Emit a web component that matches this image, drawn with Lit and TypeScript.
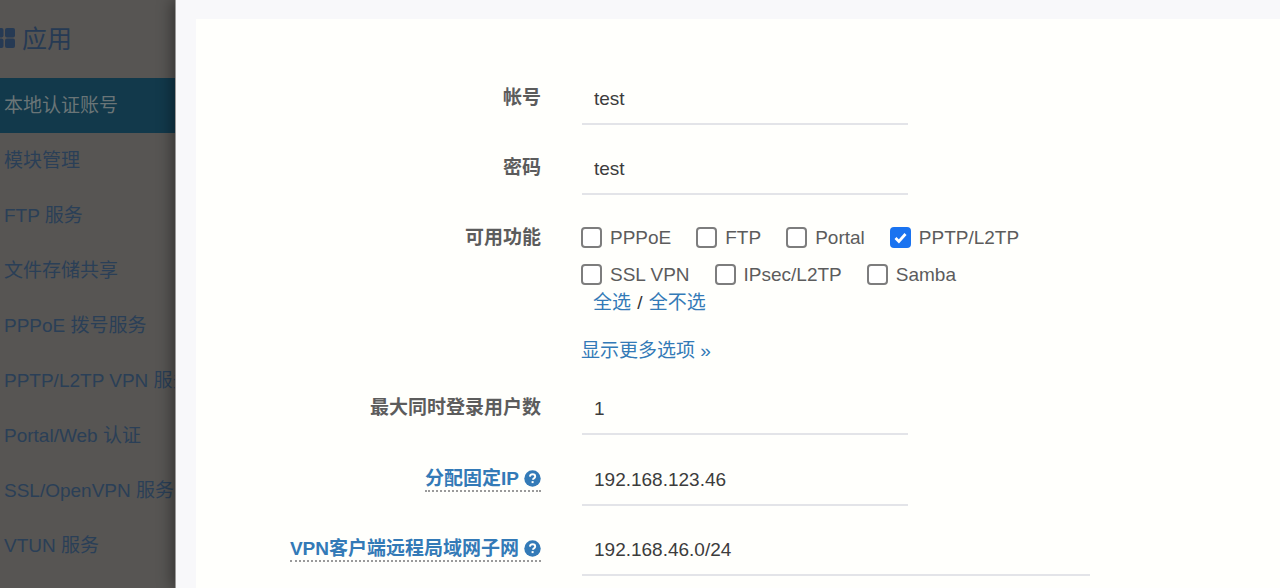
import { LitElement, html, css } from 'lit';
import { customElement } from 'lit/decorators.js';

const MENU = ['本地认证账号', '模块管理', 'FTP 服务', '文件存储共享', 'PPPoE 拨号服务', 'PPTP/L2TP VPN 服务', 'Portal/Web 认证', 'SSL/OpenVPN 服务', 'VTUN 服务'];
const ROW1 = [['PPPoE', false], ['FTP', false], ['Portal', false], ['PPTP/L2TP', true]] as const;
const ROW2 = [['SSL VPN', false], ['IPsec/L2TP', false], ['Samba', false]] as const;

@customElement('app-root')
export class AppRoot extends LitElement {
    static styles = css`
        :host {
            display: flex;
            width: 1280px;
            height: 588px;
            overflow: hidden;
            background: #575553;
            font-family: 'Liberation Sans', 'Noto Sans CJK SC', sans-serif;
            font-size: 19px;
            color: #555;
        }

        .side {
            flex: 0 0 175px;
            width: 175px;
            overflow: hidden;
            color: #2a3f57;
            white-space: nowrap;
        }

        .brand {
            display: flex;
            align-items: center;
            height: 78px;
            padding-bottom: 2px;
            box-sizing: border-box;
            font-size: 25px;
            color: #263a54;
        }

        .brand svg {
            flex: none;
            margin-left: -6px;
            margin-right: 7px;
        }

        .brand span {
            margin-bottom: 3px;
        }

        .item {
            height: 55px;
            line-height: 55px;
            padding-left: 4px;
        }

        .item.on {
            background: #12394b;
            color: #6a7577;
        }

        .modal {
            flex: 1;
            position: relative;
            background: #f8f8fa;
            margin-left: 1px;
            padding: 19px 0 0 20px;
            box-shadow: -1px 0 0 #9b9a99, -4px 0 14px rgba(0, 0, 0, 0.4);
            overflow: hidden;
        }

        .card {
            height: 569px;
            background: #fffffc;
            padding-top: 54px;
            box-sizing: border-box;
        }

        .row {
            display: grid;
            grid-template-columns: 345px 1fr;
            column-gap: 41px;
            align-items: start;
        }

        .label {
            text-align: right;
            font-weight: 700;
            line-height: 50px;
            color: #5c5c5c;
        }

        .label .tip {
            display: inline-flex;
            align-items: center;
            gap: 5px;
            color: #337ab7;
            line-height: 23px;
            border-bottom: 2px dotted #9a9a9a;
        }

        .input {
            width: 326px;
            height: 52px;
            line-height: 52px;
            padding-left: 12px;
            box-sizing: border-box;
            border-bottom: 2px solid #e3e4e8;
            color: #3c3c3c;
        }

        .input.wide {
            width: 508px;
        }

        .gap18 { margin-bottom: 18px; }
        .gap19 { margin-bottom: 19px; }

        .boxes {
            display: flex;
            align-items: center;
            height: 37px;
        }

        .check {
            display: flex;
            align-items: center;
            margin-right: 26px;
            color: #5c5c5c;
        }

        .box {
            flex: none;
            width: 21px;
            height: 21px;
            margin-left: -1px;
            margin-right: 8px;
            border: 2px solid #7d7d7d;
            border-radius: 4px;
            box-sizing: border-box;
            background: #fff;
        }

        .box.on {
            display: flex;
            align-items: center;
            justify-content: center;
            border: none;
            background: #1a73f0;
        }

        .picks {
            padding-left: 11px;
            margin-top: -2px;
            line-height: 24px;
            color: #333;
        }

        .picks span {
            padding: 0 1px;
        }

        a {
            color: #337ab7;
            text-decoration: none;
        }

        .more {
            display: block;
            margin-top: 24px;
            margin-left: -1px;
            line-height: 24px;
        }

        .feat .label { line-height: 24px; padding-top: 7px; }
        .feat { margin-bottom: 20px; padding-top: 6px; }
    `;

    checks(list: readonly (readonly [string, boolean])[]) {
        return html`<div class="boxes">
            ${list.map(([name, on]) => html`<div class="check">
                <span class="box ${on ? 'on' : ''}">
                    ${on ? html`<svg width="15" height="15" viewBox="0 0 15 15"><path d="M2.5 8l3.4 3.4L12.5 4" fill="none" stroke="#fff" stroke-width="2.8"/></svg>` : ''}
                </span>${name}
            </div>`)}
        </div>`;
    }

    help() {
        return html`<svg width="17" height="17" viewBox="0 0 17 17">
            <circle cx="8.5" cy="8.5" r="8.2" fill="#337ab7"/>
            <path d="M5.9 6.6c.2-1.6 1.3-2.3 2.7-2.3 1.5 0 2.6.9 2.6 2.1 0 1-.6 1.5-1.3 2-.6.4-.9.7-.9 1.4" fill="none" stroke="#fffffc" stroke-width="1.9"/>
            <rect x="7.6" y="11.1" width="2" height="2" fill="#fffffc"/>
        </svg>`;
    }

    render() {
        return html`
            <nav class="side">
                <div class="brand">
                    <svg width="21" height="20" viewBox="0 0 21 20" fill="#263a54">
                        <rect x="0" y="0" width="9.5" height="9.5" rx="2"/>
                        <rect x="11" y="0" width="10" height="9.5" rx="2"/>
                        <rect x="0" y="10.5" width="9.5" height="9.5" rx="2"/>
                        <rect x="11" y="10.5" width="10" height="9.5" rx="2"/>
                    </svg>
                    <span>应用</span>
                </div>
                ${MENU.map((m, i) => html`<div class="item ${i === 0 ? 'on' : ''}">${m}</div>`)}
            </nav>
            <section class="modal">
                <div class="card">
                    <div class="row gap18">
                        <div class="label">帐号</div>
                        <div class="input">test</div>
                    </div>
                    <div class="row gap18">
                        <div class="label">密码</div>
                        <div class="input">test</div>
                    </div>
                    <div class="row feat">
                        <div class="label">可用功能</div>
                        <div>
                            ${this.checks(ROW1)}
                            ${this.checks(ROW2)}
                            <div class="picks"><a href="#">全选</a><span> / </span><a href="#">全不选</a></div>
                            <a class="more" href="#">显示更多选项 »</a>
                        </div>
                    </div>
                    <div class="row gap19">
                        <div class="label">最大同时登录用户数</div>
                        <div class="input">1</div>
                    </div>
                    <div class="row gap18">
                        <div class="label"><span class="tip">分配固定IP ${this.help()}</span></div>
                        <div class="input">192.168.123.46</div>
                    </div>
                    <div class="row">
                        <div class="label"><span class="tip">VPN客户端远程局域网子网 ${this.help()}</span></div>
                        <div class="input wide">192.168.46.0/24</div>
                    </div>
                </div>
            </section>
        `;
    }
}
